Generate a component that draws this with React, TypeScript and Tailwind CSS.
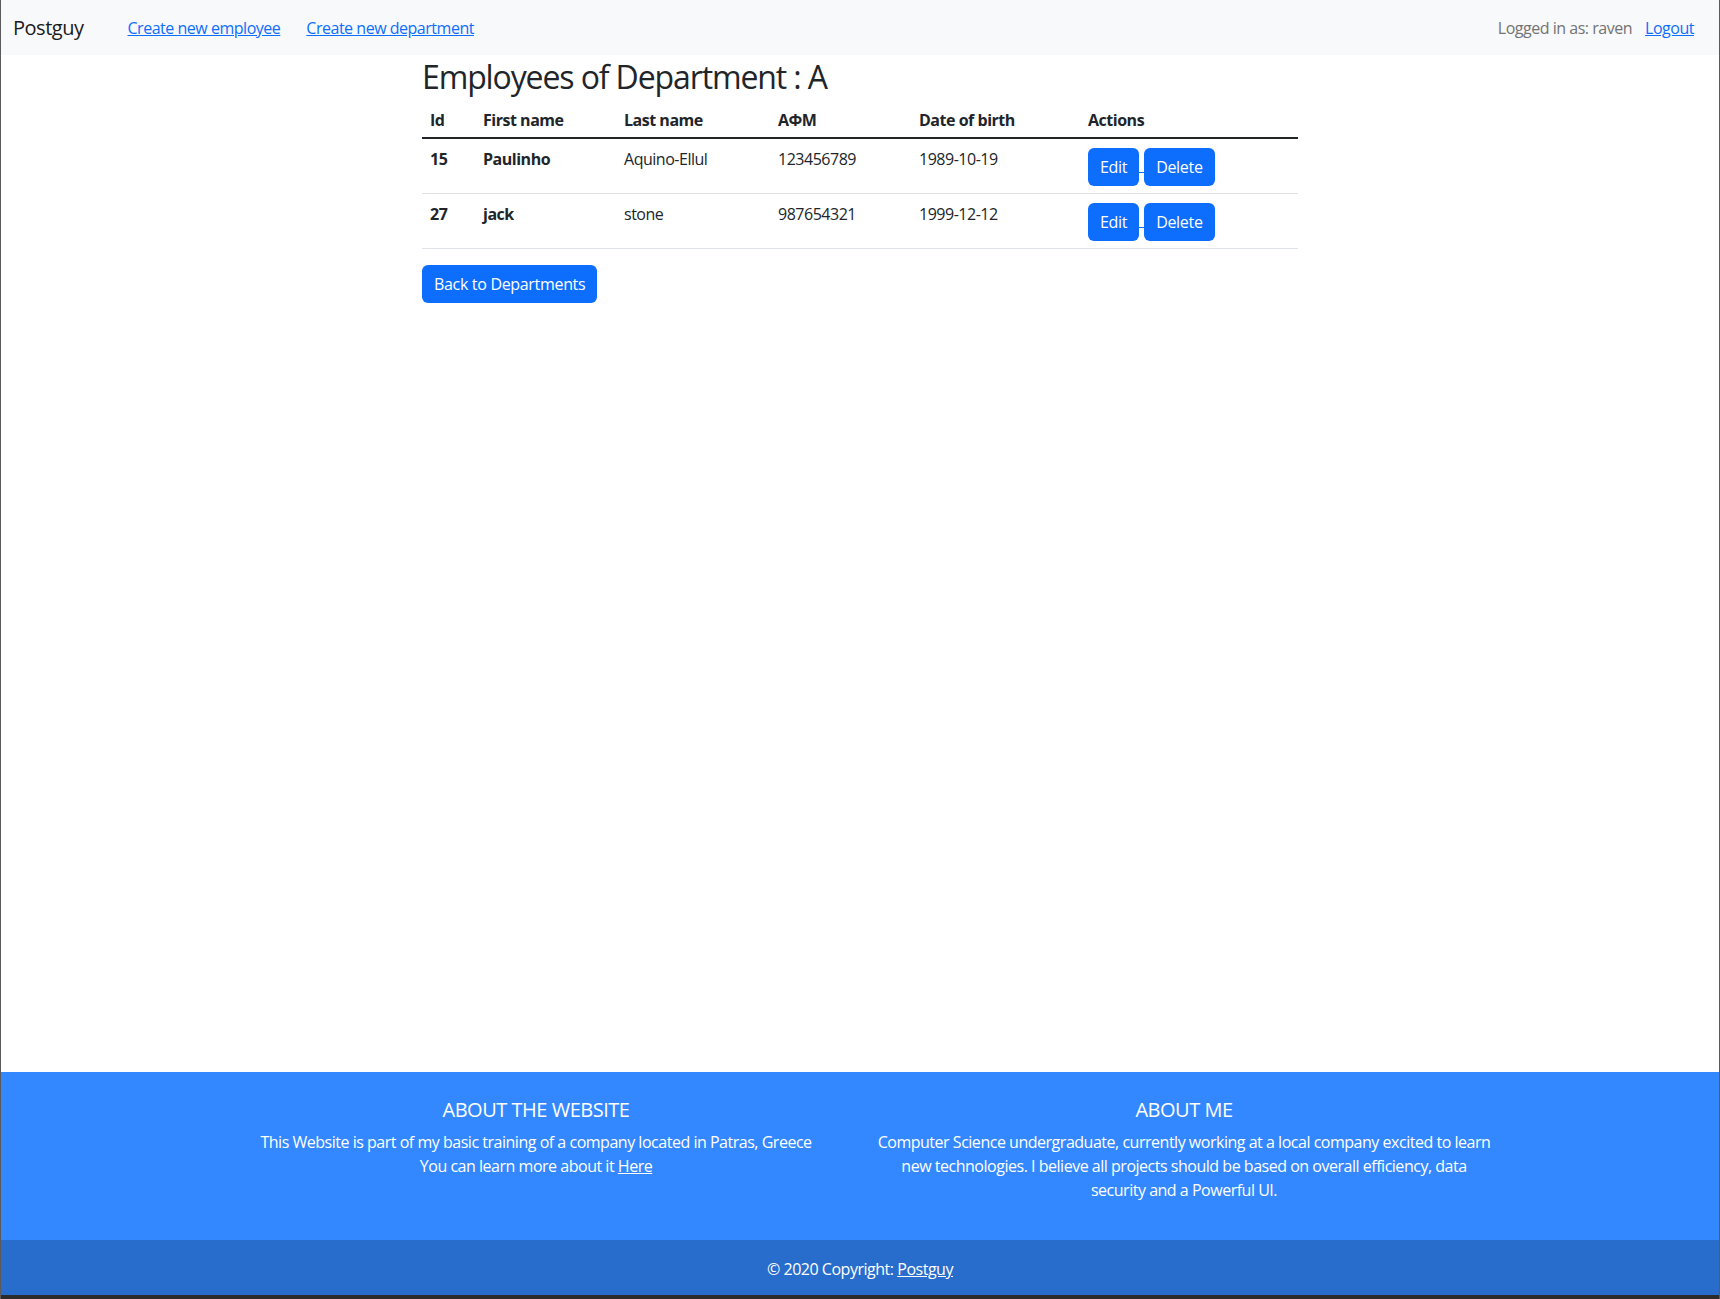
import React from 'react';

const employees = [
  { id: 15, first: 'Paulinho', last: 'Aquino-Ellul', afm: '123456789', dob: '1989-10-19' },
  { id: 27, first: 'jack', last: 'stone', afm: '987654321', dob: '1999-12-12' },
];

const columns = [
  { label: 'Id', w: 'w-[53px]' },
  { label: 'First name', w: 'w-[141px]' },
  { label: 'Last name', w: 'w-[154px]' },
  { label: 'ΑΦΜ', w: 'w-[141px]' },
  { label: 'Date of birth', w: 'w-[169px]' },
  { label: 'Actions', w: '' },
];

function Button({ children }: { children: React.ReactNode }) {
  return (
    <button className="bg-[#0d6efd] text-white text-base leading-6 px-3 py-[7px] rounded-[6px] tracking-[-0.02em]">
      {children}
    </button>
  );
}

export default function App() {
  return (
    <div
      className="h-[1299px] flex flex-col border-x border-[#5a5a5a] bg-white text-[#212529] overflow-hidden"
      style={{ fontFamily: '"Open Sans", "Noto Sans", sans-serif' }}
    >
      {/* Navbar */}
      <nav className="h-[55px] bg-[#f8f9fa] flex items-center pl-3 pr-[25px] text-base tracking-[-0.03em]">
        <span className="text-[20px] text-[#1a1a1a] mr-[44px]">Postguy</span>
        <a href="#" className="text-[#0d6efd] underline mr-[26px]">Create new employee</a>
        <a href="#" className="text-[#0d6efd] underline">Create new department</a>
        <div className="ml-auto flex items-center gap-[13px]">
          <span className="text-[#737373]">Logged in as: raven</span>
          <a href="#" className="text-[#0d6efd] underline">Logout</a>
        </div>
      </nav>

      {/* Content */}
      <main className="flex-1">
        <div className="max-w-[900px] mx-auto px-3 tracking-[-0.03em]">
          <h2 className="text-[32px] leading-[38px] mt-[3px] mb-px tracking-[-0.035em]">
            Employees of Department : A
          </h2>
          <table className="w-full text-left border-collapse mb-4">
            <thead>
              <tr>
                {columns.map((c) => (
                  <th key={c.label} className={`${c.w} px-2 pt-[11px] pb-[5px] font-bold leading-6`}>
                    {c.label}
                  </th>
                ))}
              </tr>
            </thead>
            <tbody className="border-t-2 border-[#212529]">
              {employees.map((e) => (
                <tr key={e.id} className="border-b border-[#dee2e6] align-top">
                  <td className="p-2 font-bold leading-6">{e.id}</td>
                  <td className="p-2 font-bold leading-6">{e.first}</td>
                  <td className="p-2 leading-6">{e.last}</td>
                  <td className="p-2 leading-6">{e.afm}</td>
                  <td className="p-2 leading-6">{e.dob}</td>
                  <td className="p-2 pt-[9px] pb-[7px]">
                    <div className="flex">
                      <Button>Edit</Button>
                      <span className="w-[5px] h-[25px] border-b border-[#0d6efd]" />
                      <Button>Delete</Button>
                    </div>
                  </td>
                </tr>
              ))}
            </tbody>
          </table>
          <Button>Back to Departments</Button>
        </div>
      </main>

      {/* Footer */}
      <footer className="text-white tracking-[-0.03em]">
        <div className="bg-[#3388ff] h-[168px] pt-[26px]">
          <div className="max-w-[1320px] mx-auto px-3 grid grid-cols-2 text-center">
            <div className="px-3">
              <h5 className="text-[20px] leading-6 mb-2">ABOUT THE WEBSITE</h5>
              <p className="text-base leading-6">
                This Website is part of my basic training of a company located in Patras, Greece
                <br />
                You can learn more about it <a href="#" className="underline">Here</a>
              </p>
            </div>
            <div className="px-[14px]">
              <h5 className="text-[20px] leading-6 mb-2">ABOUT ME</h5>
              <p className="text-base leading-6">
                Computer Science undergraduate, currently working at a local company excited to learn
                new technologies. I believe all projects should be based on overall efficiency, data
                security and a Powerful UI.
              </p>
            </div>
          </div>
        </div>
        <div className="bg-[#296dcc] h-[55px] flex items-center justify-center text-base pt-[3px]">
          © 2020 Copyright:&nbsp;<a href="#" className="underline">Postguy</a>
        </div>
      </footer>
      <div className="h-[4px] bg-[#2b2b2b]" />
    </div>
  );
}
